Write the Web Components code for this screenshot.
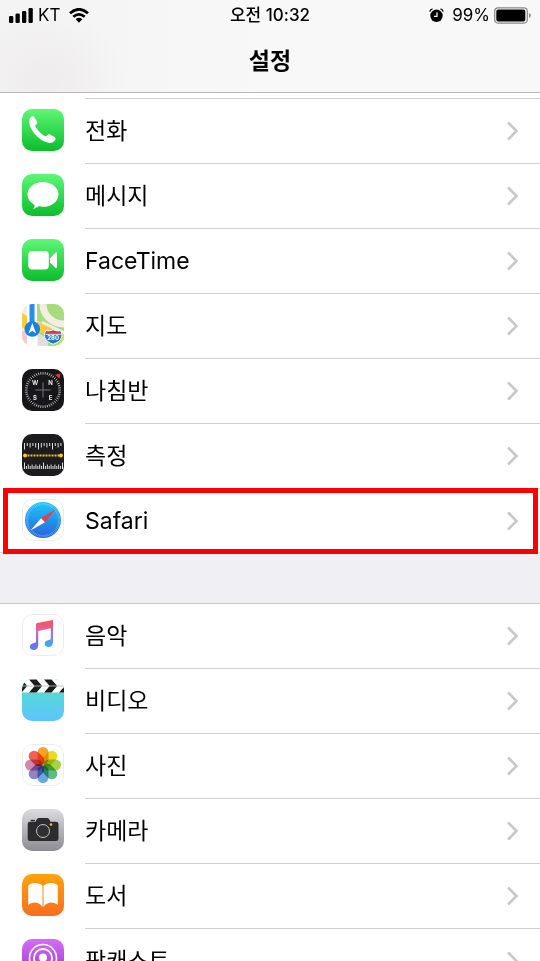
<!DOCTYPE html>
<html lang="ko">
<head>
<meta charset="utf-8">
<meta name="viewport" content="width=device-width, initial-scale=1">
<title>설정</title>
<style>
    body {
        margin: 0;
        background: #efeff4;
        color: #000;
        font-family: Inter, "Noto Sans CJK KR", sans-serif;
    }
</style>
</head>
<body>

<settings-screen>
    <status-bar slot="status" battery="99">
        <span slot="carrier">KT</span>
        <span slot="time">오전 10:32</span>
    </status-bar>
    <span slot="title">설정</span>

    <settings-group continued>
        <settings-row icon="phone">전화</settings-row>
        <settings-row icon="messages">메시지</settings-row>
        <settings-row icon="facetime">FaceTime</settings-row>
        <settings-row icon="maps">지도</settings-row>
        <settings-row icon="compass">나침반</settings-row>
        <settings-row icon="measure">측정</settings-row>
        <settings-row icon="safari" highlighted>Safari</settings-row>
    </settings-group>

    <settings-group>
        <settings-row icon="music">음악</settings-row>
        <settings-row icon="videos">비디오</settings-row>
        <settings-row icon="photos">사진</settings-row>
        <settings-row icon="camera">카메라</settings-row>
        <settings-row icon="books">도서</settings-row>
        <settings-row icon="podcasts">팟캐스트</settings-row>
    </settings-group>
</settings-screen>

<script>
// n ticks around a circle, used by the two compass faces
function ticks(n, cx, cy, r1, r2, color, width) {
    let out = '';
    for (let i = 0; i < n; i++) {
        out += `<line x1="${cx}" y1="${cy - r1}" x2="${cx}" y2="${cy - r2}" stroke="${color}" stroke-width="${width}" transform="rotate(${i * 360 / n} ${cx} ${cy})"/>`;
    }
    return out;
}

// vertical ruler marks, every nth one is long
function ruler(y, dir, step, long) {
    let out = '';
    for (let i = 0; i * step < 39; i++) {
        const len = i % long === 0 ? 6.5 : (i % 2 ? 3 : 4.5);
        out += `<line x1="${2.5 + i * step}" x2="${2.5 + i * step}" y1="${y}" y2="${y + dir * len}" stroke="#ddd" stroke-width="1"/>`;
    }
    return out;
}

function petals() {
    const colors = ['#f99d1c', '#e8d817', '#a4cf3c', '#54b884', '#5fa4dc', '#8a7dc0', '#cc7fae', '#f2594b'];
    return colors.map((c, i) =>
        `<rect x="15.500" y="3" width="11" height="17.500" rx="5.500" fill="${c}" style="mix-blend-mode: multiply" opacity=".95" transform="rotate(${i * 45} 21 21)"/>`
    ).join('');
}

const gradient = (from, to) => `
    <defs><linearGradient id="bg" x1="0" y1="0" x2="0" y2="1">
        <stop offset="0" stop-color="${from}"/><stop offset="1" stop-color="${to}"/>
    </linearGradient></defs>`;
const filled = (from, to) => gradient(from, to) + '<rect width="42" height="42" fill="url(#bg)"/>';
const outlined = '<rect x=".5" y=".5" width="41" height="41" rx="9.5" fill="#fff" stroke="#ececf0"/>';

const icons = {
    phone: filled('#5ef777', '#0bbd2b') + `
        <path fill="#fff" d="M9.200 7.800c1.300-.9 2.700-.5 3.400.7l2.200 3.700c.8 1.400.5 2.400-.6 3.300-1 .8-1.100 1.500-.4 2.800 1.700 3 5.200 6.500 8.500 8.400 1.200.7 2 .6 2.800-.4 1-1.200 2.100-1.400 3.500-.6l4 2.200c1.200.8 1.400 2.100.5 3.300-1.700 2.400-4.400 3.300-7.700 2.400C18 31.500 10.300 24 7.700 16.200c-1.100-3.400-.6-6.600 1.500-8.400z"/>`,
    messages: filled('#5ef777', '#0bbd2b') + `
        <path fill="#fff" d="M21 8c8.600 0 15.500 5.500 15.500 12.400S29.600 32.800 21 32.800c-1.600 0-3.100-.2-4.500-.5-1.500 1.300-3.200 2.200-5.600 2.400 1.200-1.100 1.800-2.400 1.700-4-4.300-2.200-7.100-6-7.100-10.300C5.500 13.500 12.400 8 21 8z"/>`,
    facetime: filled('#5ef777', '#0bbd2b') + `
        <rect x="6.300" y="12" width="20.500" height="18.500" rx="4" fill="#fff"/>
        <path fill="#fff" d="M28 19.200l5-5.300c1-.9 2-.7 2 .7v13.200c0 1.400-1 1.600-2 .7l-5-5.300z"/>`,
    maps: `
        <rect width="42" height="42" fill="#f2eee6"/>
        <path d="M14 0h28v42H16V22z" fill="#a6dd7c"/>
        <path d="M0 6h5v20H0z" fill="#f2eee6"/>
        <path d="M0 27h6v15H0z" fill="#f8c6d2"/>
        <path d="M16 29l10 6v7H16z" fill="#e1dfdc"/>
        <path d="M0 8l42 27v-8L14 14 0 3z" fill="#f2eee6"/>
        <path d="M0 9l5 3v15l-5-4zM14 17l28 13v7L14 27z" fill="#fdc93d"/>
        <path d="M15 0h5v19l-5-2z" fill="#a6dd7c"/>
        <path d="M21 0c0 12 10 20 21 20" fill="none" stroke="#f2eee6" stroke-width="7"/>
        <path d="M5 0h10v42H5z" fill="#fff"/>
        <path d="M7.500 0h5v22h-5z" fill="#258ee8"/>
        <circle cx="10.300" cy="25" r="7.800" fill="#1683e3"/>
        <path d="M10.300 19l3.800 10.500-3.800-2.700-3.800 2.700z" fill="#fff"/>
        <path d="M24 26.500c2 .7 4 .5 7.200-.8 3.200 1.300 5.300 1.500 7.200.8 1.500 2.500 2 4.500 1.200 7-1 3.500-4.400 5.200-8.400 6.700-4-1.500-7.400-3.200-8.400-6.700-.8-2.500-.3-4.500 1.200-7z" fill="#247cc7" stroke="#fff" stroke-width="1"/>
        <path d="M24.500 27.700q3.500.8 6.700-.7 3.200 1.500 6.700.7l.9 2.300H23.600z" fill="#e0343b"/>
        <path d="M23.300 30.300h15.800" stroke="#fff" stroke-width=".8"/>
        <text x="31.200" y="36.200" text-anchor="middle" font-size="6" font-weight="700" fill="#fff">280</text>`,
    compass: `
        <rect width="42" height="42" fill="#17171a"/>
        ${ticks(48, 21, 21, 18, 15.5, '#d0d0d0', .8)}
        <path d="M21 13.500v15M13.500 21h15" stroke="#77777a" stroke-width="1"/>
        <path d="M33 5.800l5.500-1.300-1 5.300z" fill="#f32c3d"/>
        <g fill="#e6e6e6" font-size="6" font-weight="700" text-anchor="middle">
            <text x="13" y="15.500">W</text><text x="28.500" y="15.500">N</text>
            <text x="13" y="30.500">S</text><text x="28.500" y="30.500">E</text>
        </g>`,
    measure: `
        <rect width="42" height="42" fill="#1c1c1e"/>
        ${ruler(9, 1, 2.8, 5)}
        ${ruler(35, -1, 1.9, 10)}
        <path d="M2.500 21.500h37" stroke="#f5bd25" stroke-width="1.800" stroke-dasharray="2 1"/>
        <circle cx="3" cy="21.500" r="1.900" fill="#ffc928"/><circle cx="39" cy="21.500" r="1.900" fill="#ffc928"/>`,
    safari: outlined + gradient('#1fc8fb', '#2662dc') + `
        <circle cx="21" cy="21" r="18" fill="url(#bg)"/>
        ${ticks(60, 21, 21, 17, 15, '#b8e4fb', .4)}
        <path d="M33.500 10.500L22.900 23.200 19 19.200z" fill="#f33b3a"/>
        <path d="M8.500 31.500L19 19.200l3.900 4z" fill="#fff"/>`,
    music: outlined + `
        <defs><linearGradient id="note" gradientUnits="userSpaceOnUse" x1="24" y1="7" x2="20" y2="35">
            <stop offset="0" stop-color="#f8535f"/><stop offset=".45" stop-color="#d468b4"/>
            <stop offset=".75" stop-color="#8668f4"/><stop offset="1" stop-color="#6178fa"/>
        </linearGradient>
        <linearGradient id="right" gradientUnits="userSpaceOnUse" x1="0" y1="7" x2="0" y2="33">
            <stop offset="0" stop-color="#f8535f"/><stop offset=".55" stop-color="#9c77df"/><stop offset=".85" stop-color="#41a6f5"/>
        </linearGradient></defs>
        <path d="M14 10.500q0-1.200 1.200-1.500L31 6v7.800l-14.800 3.200v14c0 3-2 5-4.600 5-2.200 0-3.800-1.300-3.800-3.200 0-2.300 1.900-3.500 4.200-3.900 1.600-.3 2-.6 2-2z" fill="url(#note)"/>
        <path d="M31 6v22c0 3.200-1.900 5-4.600 5-2.200 0-3.800-1.300-3.800-3.200 0-2.300 1.900-3.500 4.200-3.900 1.500-.3 2-.7 2-2V11z" fill="url(#right)"/>`,
    videos: filled('#50e3c6', '#5fc3fd') + `
        <rect width="42" height="13.500" fill="#fff"/>
        <g fill="#1b1b1d">
            <path d="M-8 .5h7.500l5.500 6.300h-7.500zM7 .5h7.500L20 6.800h-7.500zM22 .5h7.500L35 6.800h-7.500z"/>
            <path d="M-2.500 7.200H5l-5.500 6.300H-8zM12.500 7.200H20l-5.500 6.300H7zM27.500 7.200H35l-5.500 6.300H22zM42 8v5.500h-5z"/>
        </g>
        <path d="M0 7h42" stroke="#888" stroke-width=".5"/>`,
    photos: outlined + `<g style="isolation: isolate">${petals()}</g>`,
    camera: filled('#dcdbe0', '#8d8c92') + `
        <path fill="#2c2c2e" d="M8 12.700h5.500c1.300-2.400 1.700-3.700 3.500-3.700h8c1.800 0 2.200 1.300 3.500 3.700H34q2.500 0 2.500 2.300v14.700q0 2.300-2.500 2.300H8q-2.300 0-2.300-2.300V15q0-2.300 2.300-2.300z"/>
        <rect x="8.500" y="10.700" width="4.500" height="1.500" rx=".7" fill="#2c2c2e"/>
        <circle cx="21" cy="22" r="6.500" fill="#303032" stroke="#c2c2c6" stroke-width="1"/>
        <circle cx="29" cy="15.500" r="1.300" fill="#fbc42b"/>`,
    books: filled('#ffa40b', '#fa6c20') + `
        <path fill="#fff" d="M20.500 12C18 8.500 10 7.500 6.200 11.500v19.500C10 27 17.500 27.500 20.500 33zM21.500 12C24 8.500 32 7.500 35.800 11.500v19.500C32 27 24.500 27.500 21.500 33z"/>`,
    podcasts: filled('#d66cf5', '#8e35d0') + `
        <g fill="none" stroke="#fff">
            <circle cx="21" cy="19" r="13.500" stroke-width="1.600"/>
            <circle cx="21" cy="19" r="9" stroke-width="1.800"/>
        </g>
        <circle cx="21" cy="18.500" r="4" fill="#fff"/>
        <path d="M17 24.500h8l-1.300 10h-5.400z" fill="#fff"/>`,
};

class AppIcon extends HTMLElement {
    constructor() {
        super();
        const shadow = this.attachShadow({ mode: 'open' });
        shadow.innerHTML = `
            <style>
            :host {
                display: block;
                width: 42px;
                height: 42px;
                border-radius: 10px;
                overflow: hidden;
            }
            svg { display: block; }
            </style>
            <svg width="42" height="42" viewBox="0 0 42 42" aria-hidden="true">${icons[this.getAttribute('name')] || ''}</svg>
        `;
    }
}
customElements.define('app-icon', AppIcon);

class StatusBar extends HTMLElement {
    constructor() {
        super();
        const shadow = this.attachShadow({ mode: 'open' });
        const battery = this.getAttribute('battery');
        shadow.innerHTML = `
            <style>
            :host {
                display: grid;
                grid-template-columns: 1fr auto 1fr;
                align-items: center;
                padding: 0 9px;
                font-size: 17px;
                line-height: 30px;
            }
            svg { display: block; }
            .side { display: flex; align-items: center; gap: 5px; }
            .right { justify-content: flex-end; gap: 4px; }
            .wifi { margin-left: 4px; }
            .alarm { margin-right: 4px; }
            .time { font-weight: 500; }
            </style>
            <div class="side">
                <svg width="24" height="15" viewBox="0 0 24 15" aria-hidden="true">
                    <rect y="8" width="4.300" height="7" rx="1.300"/>
                    <rect x="6.500" y="5.500" width="4.300" height="9.500" rx="1.300"/>
                    <rect x="13" y="3" width="4.300" height="12" rx="1.300"/>
                    <rect x="19.500" width="4.300" height="15" rx="1.300"/>
                </svg>
                <slot name="carrier"></slot>
                <svg class="wifi" width="20" height="15" viewBox="0 0 20 15" aria-hidden="true">
                    <path d="M1 5.200Q10-2.600 19 5.200M4.300 8.700Q10 4 15.700 8.700" fill="none" stroke="#000" stroke-width="2.700"/>
                    <path d="M6.700 11.200Q10 8.500 13.300 11.200L10 14.800z"/>
                </svg>
            </div>
            <div class="time"><slot name="time"></slot></div>
            <div class="side right">
                <svg class="alarm" width="15" height="15" viewBox="0 0 15 15" aria-hidden="true">
                    <circle cx="7.500" cy="7.800" r="6.200"/>
                    <path d="M.8 3.600Q1.200 1.600 3.500.9M14.200 3.600Q13.800 1.600 11.500.9" stroke="#000" stroke-width="1.300" fill="none"/>
                    <path d="M8 4.200v4.100H5" stroke="#fff" stroke-width="1.200" fill="none"/>
                </svg>
                <span>${battery}%</span>
                <svg width="37" height="17" viewBox="0 0 37 17" aria-hidden="true">
                    <rect x=".7" y=".9" width="32.600" height="15.200" rx="3.500" fill="none" stroke="#888" stroke-width="1.200"/>
                    <rect x="2.300" y="2.500" width="${Math.round(29.4 * battery / 100)}" height="12" rx="2"/>
                    <path d="M35 6q1.800.6 1.800 2.500T35 11z" fill="#888"/>
                </svg>
            </div>
        `;
    }
}
customElements.define('status-bar', StatusBar);

class SettingsScreen extends HTMLElement {
    constructor() {
        super();
        const shadow = this.attachShadow({ mode: 'open' });
        shadow.innerHTML = `
            <style>
            :host {
                display: flex;
                flex-direction: column;
                height: 100vh;
            }
            header {
                flex: none;
                border-bottom: 1px solid #b8b8bb;
                background: radial-gradient(ellipse 80px 70px at 46px 80px, #eeecec, transparent), linear-gradient(90deg, #f4f3f4, #f8f8f8 50%);
            }
            h1 {
                margin: 0;
                font-size: 23px;
                font-weight: 600;
                line-height: 62px;
                text-align: center;
            }
            main {
                flex: 1;
                min-height: 0;
                overflow-y: auto;
                scrollbar-width: none;
            }
            </style>
            <header>
                <slot name="status"></slot>
                <h1><slot name="title"></slot></h1>
            </header>
            <main><slot></slot></main>
        `;
    }
}
customElements.define('settings-screen', SettingsScreen);

class SettingsGroup extends HTMLElement {
    constructor() {
        super();
        const shadow = this.attachShadow({ mode: 'open' });
        shadow.innerHTML = `
            <style>
            :host {
                display: block;
                margin-bottom: 50px;
                background: #fff;
                box-shadow: inset 0 1px #c8c7cc, inset 0 -1px #d4d3d8;
            }
            /* starts below rows that are already scrolled away */
            :host([continued]) {
                padding-top: 5px;
                box-shadow: inset 0 -1px #d4d3d8;
            }
            :host(:not([continued])) ::slotted(:first-child) { --divider: transparent; }
            </style>
            <slot></slot>
        `;
    }
}
customElements.define('settings-group', SettingsGroup);

class SettingsRow extends HTMLElement {
    constructor() {
        super();
        const shadow = this.attachShadow({ mode: 'open' });
        const icon = this.getAttribute('icon');
        shadow.innerHTML = `
            <style>
            :host { display: block; position: relative; }
            a {
                display: flex;
                gap: 21px;
                padding-left: 22px;
                color: inherit;
                text-decoration: none;
            }
            app-icon { flex: none; margin: 11px 0 12px; }
            .body {
                flex: 1;
                display: flex;
                align-items: center;
                justify-content: space-between;
                padding-right: 21px;
                border-top: 1px solid var(--divider, #d0cfd4);
                font-size: 23px;
                line-height: 64px;
            }
            :host([highlighted])::after {
                content: "";
                position: absolute;
                inset: 0 2px -1px 3px;
                border: 5px solid #f00;
                pointer-events: none;
            }
            </style>
            <a href="#${icon}">
                <app-icon name="${icon}"></app-icon>
                <div class="body">
                    <slot></slot>
                    <svg width="13" height="20" viewBox="0 0 13 20" aria-hidden="true">
                        <path d="M2 1.500L10.500 10 2 18.500" fill="none" stroke="#c7c7cc" stroke-width="2.600"/>
                    </svg>
                </div>
            </a>
        `;
    }
}
customElements.define('settings-row', SettingsRow);
</script>
</body>
</html>
